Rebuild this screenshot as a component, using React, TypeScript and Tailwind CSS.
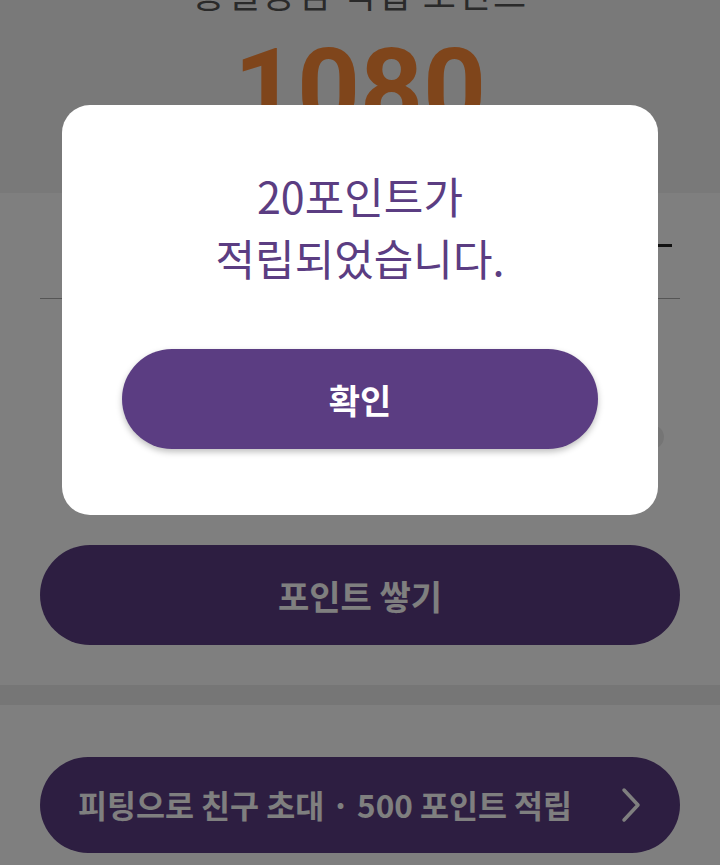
import React from "react";

const font = { fontFamily: '"Noto Sans CJK KR", "Noto Sans", sans-serif' };

const PointModal: React.FC = () => {
    return (
        <div className="fixed inset-0 bg-black/50 flex justify-center items-start pt-[105px]">
            <div className="w-[596px] h-[410px] bg-white rounded-[28px] flex flex-col items-center">
                <div className="mt-[59px] text-center text-[43px] leading-[62px] text-[#5b3d82]">
                    20포인트가<br />적립되었습니다.
                </div>
                <button className="mt-[61px] w-[476px] h-[100px] rounded-full bg-[#5b3d82] text-white text-[34px] font-bold shadow-[0_3px_6px_rgba(0,0,0,0.25)]">
                    확인
                </button>
            </div>
        </div>
    );
};

export default function App() {
    return (
        <div className="w-[720px] h-[865px] overflow-hidden bg-white relative" style={font}>
            {/* top summary */}
            <div className="h-[193px] bg-[#f2f2f2] flex flex-col items-center overflow-hidden">
                <div className="-mt-[28px] text-[36px] leading-[40px] text-[#555] tracking-[2px]">홍길동님 적립 포인트</div>
                <div className="mt-[22px] text-[110px] leading-none font-bold text-[#ff8a36]" style={{ fontFamily: "Roboto, sans-serif" }}>
                    1080
                </div>
            </div>

            {/* history rows */}
            <div className="mx-10 h-[106px] border-b border-[#aaa] flex items-center justify-end">
                <span className="w-[14px] h-[3px] bg-[#222] mr-2"></span>
            </div>
            <div className="mx-10 h-[246px] pt-[126px] flex items-start justify-end">
                <span className="w-6 h-6 rounded-full bg-[#ebebeb] mr-4"></span>
            </div>

            <div className="px-10 pb-10">
                <button className="w-full h-[100px] rounded-full bg-[#5b3d82] text-white text-[34px] font-bold">
                    포인트 쌓기
                </button>
            </div>

            <div className="h-5 bg-[#ececec]"></div>

            <div className="px-10 pt-[52px]">
                <button className="w-full h-[96px] rounded-full bg-[#5b3d82] text-white text-[31.5px] font-bold flex items-center justify-between pl-[38px] pr-[38px]">
                    <span>피팅으로 친구 초대 · 500 포인트 적립</span>
                    <svg width="22" height="36" viewBox="0 0 22 36" fill="none">
                        <path d="M4 3 L18 18 L4 33" stroke="white" strokeWidth="3.5" strokeLinecap="round" strokeLinejoin="round" />
                    </svg>
                </button>
            </div>

            <PointModal />
        </div>
    );
}
